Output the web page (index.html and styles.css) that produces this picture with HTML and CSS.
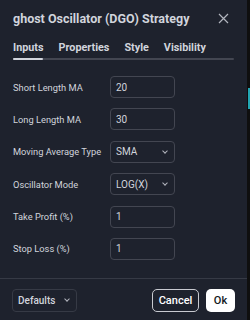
FILE: index.html
```html
<!DOCTYPE html>
<html>
<head>
    <link rel="stylesheet" href="styles.css">
</head>
<body>
    <div class="screen">
        <div class="dialog">
            <div class="header">
                <span class="title">ghost Oscillator (DGO) Strategy</span>
                <svg class="close" width="11" height="11" viewBox="0 0 11 11"><path d="M1 1L10 10M10 1L1 10" stroke="#b2b5be" stroke-width="1.2" fill="none"/></svg>
            </div>
            <div class="tabs">
                <span class="tab active">Inputs</span>
                <span class="tab">Properties</span>
                <span class="tab">Style</span>
                <span class="tab">Visibility</span>
            </div>
            <div class="tabline"><div class="tabmark"></div></div>

            <div class="rows">
                <div class="row"><label>Short Length MA</label><div class="box">20</div></div>
                <div class="row"><label>Long Length MA</label><div class="box">30</div></div>
                <div class="row"><label>Moving Average Type</label><div class="box select">SMA<span class="chev"></span></div></div>
                <div class="row"><label>Oscillator Mode</label><div class="box select">LOG(X)<span class="chev"></span></div></div>
                <div class="row"><label>Take Profit (%)</label><div class="box">1</div></div>
                <div class="row"><label>Stop Loss (%)</label><div class="box">1</div></div>
            </div>

            <div class="footer">
                <div class="box defaults select">Defaults<span class="chev"></span></div>
                <div class="buttons">
                    <span class="button cancel">Cancel</span>
                    <span class="button ok">Ok</span>
                </div>
            </div>
        </div>
        <div class="strip"><div class="candle"></div></div>
    </div>
</body>
</html>
```
FILE: styles.css
```css
body {
    margin: 0;
    background: #0f0f0f;
    font-family: Roboto, "Liberation Sans", sans-serif;
    color: #d1d4dc;
}

.screen {
    display: flex;
    width: 250px;
    height: 320px;
    overflow: hidden;
}

.dialog {
    width: 247px;
    height: 320px;
    background: #1e222d;
    display: flex;
    flex-direction: column;
}

.strip {
    width: 3px;
    background: #0f0f0f;
}

.candle {
    margin-top: 88px;
    margin-left: 1px;
    width: 2px;
    height: 21px;
    background: #22a6b3;
}

.header {
    display: flex;
    align-items: center;
    justify-content: space-between;
    height: 20px;
    padding: 8px 18px 0 13px;
}

.title {
    font-size: 12.5px;
    font-weight: 700;
    color: #d1d4dc;
}

.close {
    margin-top: 1px;
}

.tabs {
    display: flex;
    gap: 15px;
    padding: 13px 0 0 13px;
    height: 17px;
}

.tab {
    font-size: 10.8px;
    font-weight: 700;
    color: #d1d4dc;
}

.tabline {
    margin: 0 13px 0 13px;
    height: 2px;
    border-radius: 1px;
    background: #434651;
}

.tabmark {
    width: 30px;
    height: 2px;
    border-radius: 1px;
    background: #d1d4dc;
}

.rows {
    display: flex;
    flex-direction: column;
    gap: 10.4px;
    padding: 16px 0 0 13px;
}

.row {
    display: flex;
    align-items: center;
    height: 22px;
}

label {
    width: 97px;
    font-size: 9.3px;
}

.box {
    box-sizing: border-box;
    width: 65px;
    height: 22px;
    border: 1px solid #434651;
    border-radius: 4px;
    padding-left: 5px;
    font-size: 10px;
    display: flex;
    align-items: center;
    position: relative;
}

.chev {
    position: absolute;
    right: 7px;
    top: 7px;
    width: 3px;
    height: 3px;
    border-right: 1px solid #b2b5be;
    border-bottom: 1px solid #b2b5be;
    transform: rotate(45deg);
}

.footer {
    margin-top: auto;
    height: 42px;
    box-sizing: border-box;
    border-top: 1px solid #363a45;
    display: flex;
    justify-content: space-between;
    align-items: flex-start;
    padding: 10px 12px 0 12px;
}

.defaults {
    width: 65px;
    height: 23px;
    font-weight: 500;
    padding-left: 5px;
    border-color: #363a45;
}

.buttons {
    display: flex;
    gap: 7px;
}

.button {
    box-sizing: border-box;
    height: 23px;
    border-radius: 5px;
    font-size: 11px;
    font-weight: 500;
    display: flex;
    align-items: center;
    justify-content: center;
}

.cancel {
    width: 47px;
    border: 1.5px solid #c8cad0;
    color: #ffffff;
}

.ok {
    width: 29px;
    background: #ffffff;
    color: #131722;
}
```
